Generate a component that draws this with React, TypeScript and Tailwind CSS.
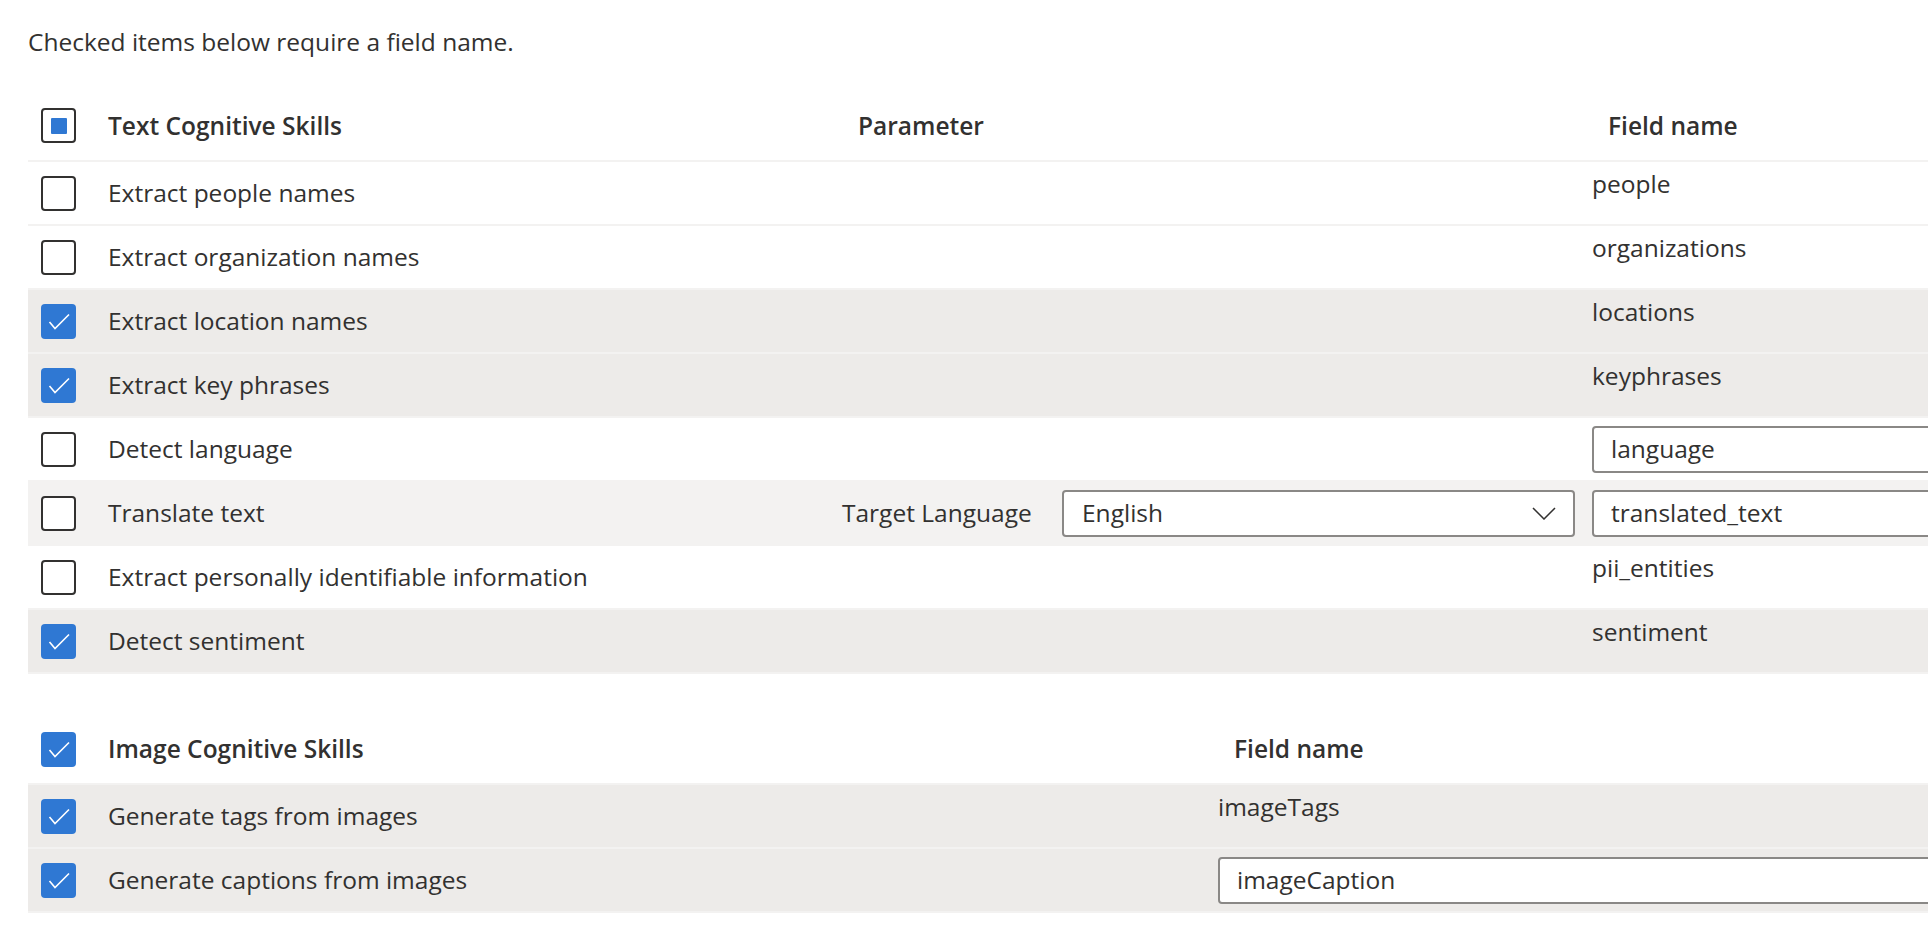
import React from "react";

type Skill = {
  label: string;
  checked: boolean;
  field: string;
  input?: boolean;
  hover?: boolean;
  param?: boolean;
};

const textSkills: Skill[] = [
  { label: "Extract people names", checked: false, field: "people" },
  { label: "Extract organization names", checked: false, field: "organizations" },
  { label: "Extract location names", checked: true, field: "locations" },
  { label: "Extract key phrases", checked: true, field: "keyphrases" },
  { label: "Detect language", checked: false, field: "language", input: true },
  { label: "Translate text", checked: false, field: "translated_text", input: true, hover: true, param: true },
  { label: "Extract personally identifiable information", checked: false, field: "pii_entities" },
  { label: "Detect sentiment", checked: true, field: "sentiment" },
];

const imageSkills: Skill[] = [
  { label: "Generate tags from images", checked: true, field: "imageTags" },
  { label: "Generate captions from images", checked: true, field: "imageCaption", input: true },
];

function Checkbox({ state }: { state: "on" | "off" | "mixed" }) {
  if (state === "on") {
    return (
      <div className="w-[35px] h-[35px] shrink-0 rounded-[4px] bg-[#2f78d3]">
        <svg width="35" height="35" viewBox="0 0 35 35" fill="none">
          <path d="M8.5 18 L14 24.5 L28 10.5" stroke="white" strokeWidth="1.6" />
        </svg>
      </div>
    );
  }
  return (
    <div className="w-[35px] h-[35px] shrink-0 rounded-[4px] border-2 border-[#323130] bg-white flex items-center justify-center">
      {state === "mixed" && <div className="w-[16px] h-[16px] rounded-[1px] bg-[#2f78d3]" />}
    </div>
  );
}

function rowBg(s: Skill) {
  if (s.checked) return "bg-[#edebe9]";
  if (s.hover) return "bg-[#f3f2f1]";
  return "bg-white";
}

function FieldCell({ s }: { s: Skill }) {
  if (s.input) {
    return (
      <div className="flex items-center">
        <div className="w-[800px] h-[47px] rounded-[4px] border-2 border-[#8a8886] bg-white flex items-center pl-[17px]">
          {s.field}
        </div>
      </div>
    );
  }
  return <div className="pt-[6px]">{s.field}</div>;
}

function NameCell({ s, header }: { s?: Skill; header?: string }) {
  return (
    <div className="flex items-center pl-[13px] gap-[32px]">
      <Checkbox state={header ? (header.startsWith("Text") ? "mixed" : "on") : s!.checked ? "on" : "off"} />
      <span className={header ? "font-semibold" : ""}>{header ?? s!.label}</span>
    </div>
  );
}

export default function App() {
  return (
    <div
      className="w-[1928px] h-[940px] overflow-hidden bg-white text-[#323130] text-[24.5px] leading-[32px]"
      style={{ fontFamily: '"Open Sans", "Noto Sans", sans-serif' }}
    >
      <div className="pl-[28px] pt-[26px]">
        <p>Checked items below require a field name.</p>

        {/* Text cognitive skills */}
        <div className="w-[1960px] mt-[33px]">
          <div className="grid grid-cols-[814px_750px_1fr] h-[71px] border-b-2 border-[#f3f2f1]">
            <NameCell header="Text Cognitive Skills" />
            <div className="flex items-center pl-[16px] font-semibold">Parameter</div>
            <div className="flex items-center pl-[16px] font-semibold">Field name</div>
          </div>
          {textSkills.map((s) => (
            <div
              key={s.label}
              className={`grid grid-cols-[814px_750px_1fr] h-[64px] border-b-2 border-[#f3f2f1] ${rowBg(s)}`}
            >
              <NameCell s={s} />
              <div className="flex items-center">
                {s.param && (
                  <>
                    <span className="w-[220px]">Target Language</span>
                    <div className="w-[513px] h-[47px] rounded-[4px] border-2 border-[#8a8886] bg-white flex items-center justify-between pl-[18px] pr-[17px]">
                      <span>English</span>
                      <svg width="24" height="13" viewBox="0 0 24 13" fill="none">
                        <path d="M1 1 L12 12 L23 1" stroke="#323130" strokeWidth="1.5" />
                      </svg>
                    </div>
                  </>
                )}
              </div>
              <FieldCell s={s} />
            </div>
          ))}
        </div>

        {/* Image cognitive skills */}
        <div className="w-[1960px] mt-[41px]">
          <div className="grid grid-cols-[1190px_1fr] h-[70px] border-b-2 border-[#f3f2f1]">
            <NameCell header="Image Cognitive Skills" />
            <div className="flex items-center pl-[16px] font-semibold">Field name</div>
          </div>
          {imageSkills.map((s) => (
            <div
              key={s.label}
              className={`grid grid-cols-[1190px_1fr] h-[64px] border-b-2 border-[#f3f2f1] ${rowBg(s)}`}
            >
              <NameCell s={s} />
              <FieldCell s={s} />
            </div>
          ))}
        </div>
      </div>
    </div>
  );
}
